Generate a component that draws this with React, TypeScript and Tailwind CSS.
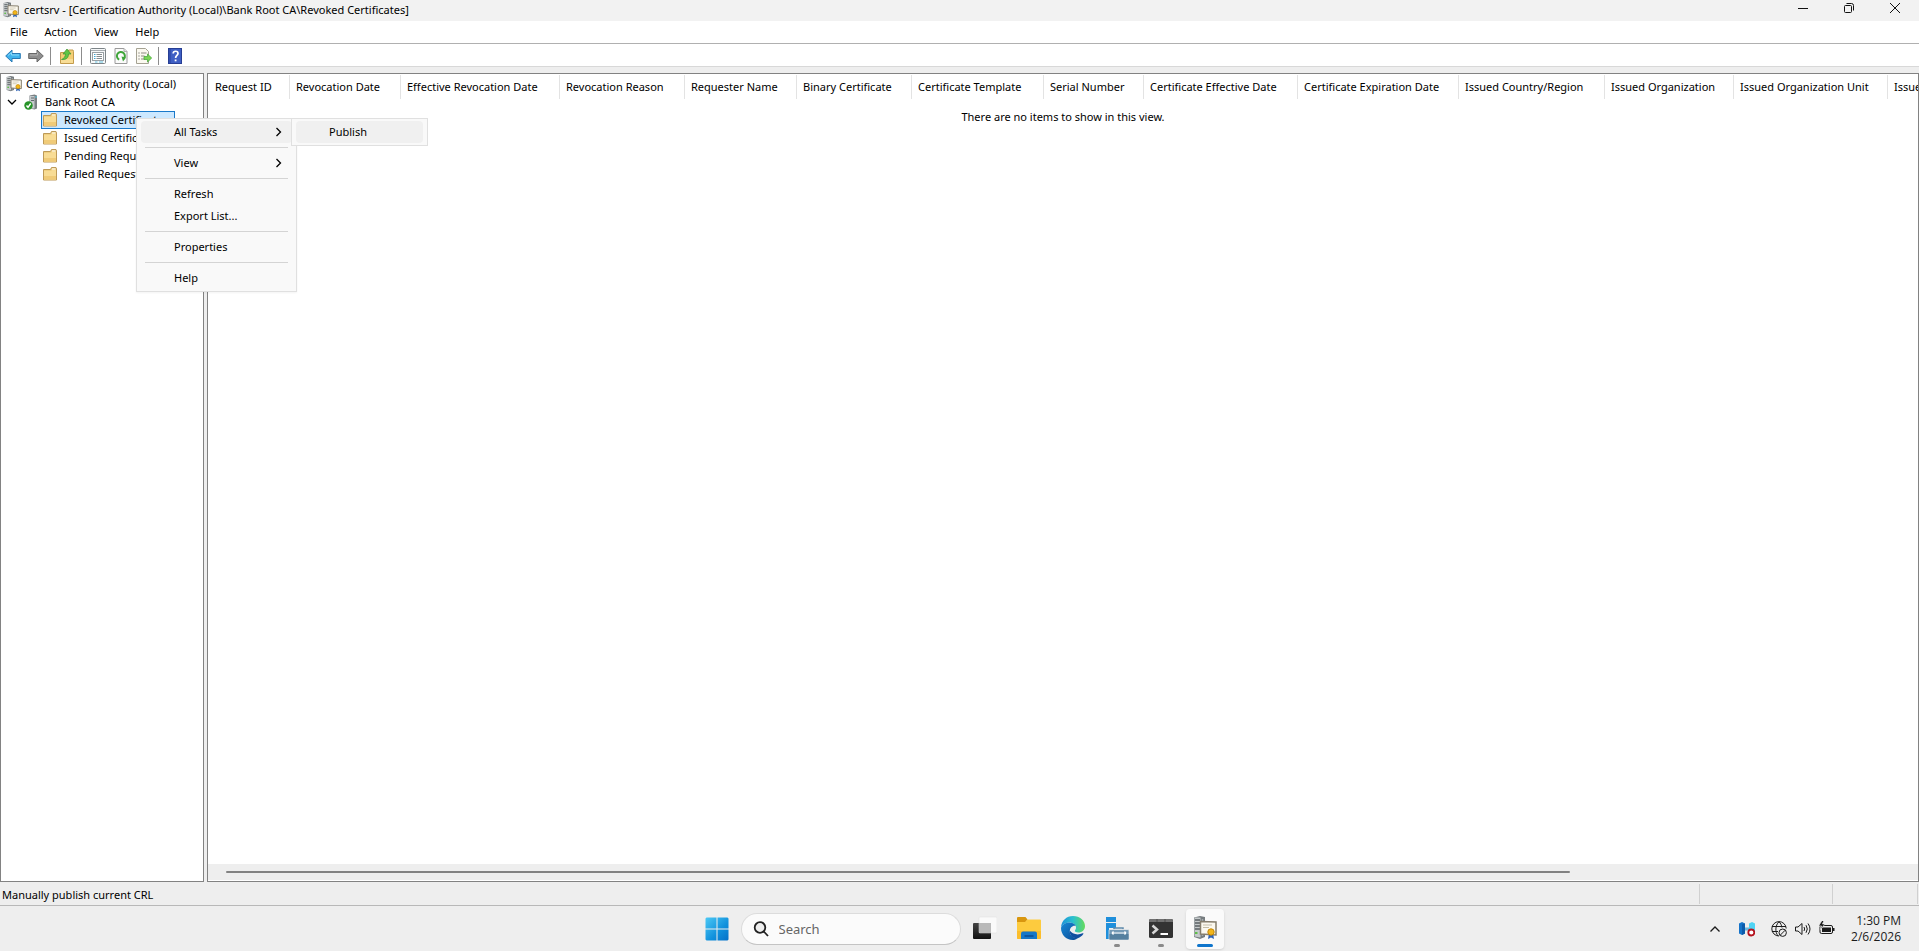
import { useState } from "react";

const columns = [
  { label: "Request ID", width: "w-[81px]" },
  { label: "Revocation Date", width: "w-[111px]" },
  { label: "Effective Revocation Date", width: "w-[159px]" },
  { label: "Revocation Reason", width: "w-[125px]" },
  { label: "Requester Name", width: "w-[112px]" },
  { label: "Binary Certificate", width: "w-[115px]" },
  { label: "Certificate Template", width: "w-[132px]" },
  { label: "Serial Number", width: "w-[100px]" },
  { label: "Certificate Effective Date", width: "w-[154px]" },
  { label: "Certificate Expiration Date", width: "w-[161px]" },
  { label: "Issued Country/Region", width: "w-[146px]" },
  { label: "Issued Organization", width: "w-[129px]" },
  { label: "Issued Organization Unit", width: "w-[154px]" },
  { label: "Issued Common Name", width: "w-[150px]" },
];

const folders = ["Revoked Certificates", "Issued Certificates", "Pending Requests", "Failed Requests"];

function CertIcon({ className }: { className: string }) {
  return (
    <svg viewBox="0 0 24 24" className={className} aria-hidden="true">
      <path d="M1 1.500 7 0l5 1v20l-5 2-6-2z" fill="#777d80" />
      <path d="M1.500 1.500H7.500v20l-6-1z" fill="#c4c9ca" />
      <path d="M2 4h5M2 7h5M2 10h5M2 13h5" stroke="#596064" strokeWidth="1.4" />
      <path d="M9.500 3v17" stroke="#a4abad" strokeWidth="1.500" />
      <rect x="2" y="16" width="2.5" height="2" fill="#5fbf4a" />
      <path d="M7.500 5.500 23 6v13l-15.500-1z" fill="#fbf8ee" stroke="#857d6c" strokeWidth="1.500" />
      <path d="M10 9h9M10 11.500h6" stroke="#c4bda8" strokeWidth="1" />
      <path d="m16 17-1 6 3-1.500 3 1.500-1-6z" fill="#2f63b5" />
      <circle cx="18" cy="16" r="3.200" fill="#f2b619" stroke="#c48608" />
    </svg>
  );
}

function FolderIcon() {
  return (
    <svg viewBox="0 0 16 16" className="size-4 shrink-0" aria-hidden="true">
      <path d="M1.500 3.500h7l1-2h4.500l.5 1.500v11h-13z" fill="#efcf80" stroke="#bd9a58" />
      <path d="M10 2.500h3.500v1H10z" fill="#fff" />
      <path d="M2 5h7l1-1h4v9.500H2z" fill="#f8dc94" />
      <path d="M2 10h12v3.500H2z" fill="#f0cb78" />
    </svg>
  );
}

function ServerIcon() {
  return (
    <svg viewBox="0 0 16 16" className="size-4 shrink-0" aria-hidden="true">
      <path d="m5.500 1.500 5-1 2.500 1v13l-2.500 1-5-1z" fill="#7a8084" />
      <path d="M6 2h4.500v12.500H6z" fill="#c5cacc" />
      <path d="M7 4h3M7 6.500h3" stroke="#62696d" />
      <path d="M11.500 3h1" stroke="#4fc5dd" strokeWidth="2" />
      <circle cx="4.500" cy="11.500" r="4.200" fill="#269328" />
      <path d="m2.500 11.500 1.500 1.800L6.700 9.500" fill="none" stroke="#fff" strokeWidth="1.400" />
    </svg>
  );
}

function BackIcon() {
  return (
    <svg viewBox="0 0 16 16" className="size-4" aria-hidden="true">
      <path d="M.7 8 7 2v3.500h8.300v5H7V14z" fill="#3fb2ec" stroke="#2878b4" />
      <path d="M3 7.500 6.500 4.500V7H14" fill="none" stroke="#8ad8fa" />
    </svg>
  );
}

function ForwardIcon() {
  return (
    <svg viewBox="0 0 16 16" className="size-4" aria-hidden="true">
      <path d="M15.300 8 9 2v3.500H.7v5H9V14z" fill="#8f8f8f" stroke="#686868" />
      <path d="M2 7h7.500V4.500" fill="none" stroke="#b5b5b5" />
    </svg>
  );
}

function UpFolderIcon() {
  return (
    <svg viewBox="0 0 16 16" className="size-4" aria-hidden="true">
      <path d="M1.500 4.500h7l1-2.500h4.500l.5 1.500v12h-13z" fill="#f3ce74" stroke="#c39b4c" />
      <path d="M2 11h12v4H2z" fill="#f8dd96" />
      <path d="M2.500 11.500C5 10.500 6.500 8.500 6.500 6H4l4-5 4 5H9.500c0 4-2.500 6-7 5.500z" fill="#5fc544" stroke="#3b9430" strokeWidth=".7" />
    </svg>
  );
}

function PropertiesIcon() {
  return (
    <svg viewBox="0 0 16 16" className="size-4" aria-hidden="true">
      <rect x=".5" y=".5" width="15" height="15" rx="1" fill="#f6f8f9" stroke="#7d8488" />
      <path d="M1 2.500h14" stroke="#a7adb1" />
      <rect x="2.500" y="4.500" width="11" height="8" fill="#fff" stroke="#9aa1a5" />
      <path d="M4 6.500h1.500M4 8.500h1.500M4 10.500h1.500" stroke="#39a5d2" />
      <path d="M6.500 6.500H12M6.500 8.500H12M6.500 10.500H12" stroke="#858c90" />
      <path d="M5 14h2.500M9 14h4" stroke="#62c1e0" />
    </svg>
  );
}

function RefreshIcon() {
  return (
    <svg viewBox="0 0 16 16" className="size-4" aria-hidden="true">
      <path d="M2 .5h9l3 3v12H2z" fill="#fbfbfb" stroke="#9a9a9a" />
      <path d="M11 .5v3h3" fill="#e4e4e4" stroke="#b0b0b0" />
      <path d="M6.200 11.600A4 4 0 1 1 10.500 11" fill="none" stroke="#3fa53a" strokeWidth="2" />
      <path d="m8.500 8.500 4.500 1-3 4z" fill="#3fa53a" />
    </svg>
  );
}

function ExportIcon() {
  return (
    <svg viewBox="0 0 16 16" className="size-4" aria-hidden="true">
      <path d="M.5.500h9l3 3v12H.500z" fill="#fbf9f0" stroke="#a5a293" />
      <path d="M2.500 5h1M2.500 8h1M2.500 11h1" stroke="#555" />
      <path d="M5 5h5.500M5 8h3.500M5 11h3.500" stroke="#8e8b80" />
      <path d="M8 8.500h3.500V6L15.700 10l-4.200 4v-2.500H8z" fill="#7bd654" stroke="#3fa236" strokeWidth=".7" />
    </svg>
  );
}

function HelpIcon() {
  return (
    <svg viewBox="0 0 16 16" className="size-4" aria-hidden="true">
      <rect x="1.500" y=".5" width="13" height="15" fill="#3f5fc4" stroke="#273e94" />
      <path d="M3 1v14" stroke="#26409c" />
      <path d="M6.200 5.500C6.200 2.500 11 2.500 11 5.500c0 2-2.400 2-2.400 4.500" fill="none" stroke="#fff" strokeWidth="1.700" />
      <path d="M7.700 11.500h1.800v1.800H7.700z" fill="#fff" />
    </svg>
  );
}

function StartIcon() {
  return (
    <svg viewBox="0 0 24 24" className="size-6" aria-hidden="true">
      <defs>
        <linearGradient id="start" x1="0" y1="0" x2="1" y2="1">
          <stop offset="0" stopColor="#4cc9f5" />
          <stop offset=".6" stopColor="#1090dc" />
          <stop offset="1" stopColor="#0570c8" />
        </linearGradient>
      </defs>
      <path d="M1.500.500H11.500v11H.500v-10zM12.500.500h10l1 1v10h-11zM.500 12.500h11v11h-10l-1-1zM12.500 12.500h11v10l-1 1h-10z" fill="url(#start)" />
    </svg>
  );
}

function TaskViewIcon() {
  return (
    <svg viewBox="0 0 24 24" className="size-6" aria-hidden="true">
      <defs>
        <linearGradient id="tvBack" x1="0" y1="0" x2="0" y2="1">
          <stop offset="0" stopColor="#444" />
          <stop offset="1" stopColor="#111" />
        </linearGradient>
      </defs>
      <rect x="0" y="7" width="18" height="16" rx="1" fill="url(#tvBack)" />
      <rect x="6" y="1" width="18" height="16" rx="1" fill="#fafafa" stroke="#dedede" strokeWidth=".5" />
      <path d="M6 7h12v10H7l-1-1z" fill="#b9b9b9" />
    </svg>
  );
}

function ExplorerIcon() {
  return (
    <svg viewBox="0 0 24 24" className="size-6" aria-hidden="true">
      <path d="M0 2q0-1 1-1h7.500l2 2.500L8 7H0z" fill="#d8960f" />
      <path d="M0 6h8l2.500-2.500H23q1 0 1 1V22q0 1-1 1H1q-1 0-1-1z" fill="#fdcb3e" />
      <path d="M0 15h24v7q0 1-1 1H1q-1 0-1-1z" fill="#fbbd2c" />
      <path d="M4 23v-5.500Q4 15.500 6 15.500h12q2 0 2 2V23z" fill="#1577c8" />
      <path d="M7.500 19h9v2h-9z" fill="#0e559e" />
    </svg>
  );
}

function EdgeIcon() {
  return (
    <svg viewBox="0 0 24 24" className="size-6" aria-hidden="true">
      <defs>
        <linearGradient id="edgeTop" x1="0" y1=".4" x2="1" y2=".4">
          <stop offset="0" stopColor="#1c91d8" />
          <stop offset=".5" stopColor="#2bc0cf" />
          <stop offset="1" stopColor="#64db5c" />
        </linearGradient>
        <linearGradient id="edgeLow" x1="0" y1="0" x2="1" y2="1">
          <stop offset="0" stopColor="#1689d6" />
          <stop offset="1" stopColor="#0c4a95" />
        </linearGradient>
      </defs>
      <path d="M0 11.500C.5 4.500 5.500 0 12 0c7 0 12 4.800 12 10 0 4-3 6.500-6.500 6.500-3 0-4-1.200-3.600-2 .5-.8 1.100-1.600 1.100-3 0-2.800-3-5-6.500-5C4.500 6.500 1 9 0 11.500z" fill="url(#edgeTop)" />
      <path d="M0 12C.5 9 4 6.500 8.500 6.500c3 0 5.500 1.500 6.300 3.500-3-.8-6 1.500-6 5.500 0 4 4 7 8 6.700-1.400 1.200-3.300 1.800-5 1.800C5 24 0 18.500 0 12z" fill="url(#edgeLow)" />
      <path d="M8.800 14.500c-.6 4.500 3.200 8.400 8 7.700 2.200-.6 4.200-2.200 5.500-4.200.4-.7-.2-1-.7-.7-5 2.300-10.800.7-12.800-2.800z" fill="#114f9f" />
    </svg>
  );
}

function ServerManagerIcon() {
  return (
    <svg viewBox="0 0 24 24" className="size-6" aria-hidden="true">
      <path d="M1 1h10v22H1z" fill="#1f8fdb" />
      <path d="M1 6.500h10" stroke="#eee" />
      <path d="M4 12h8v3H4z" fill="#efefef" />
      <path d="M9 13.500V12h9v1.500" fill="none" stroke="#5f8bac" strokeWidth="1.500" />
      <rect x="4" y="13.500" width="20" height="10.500" rx="1" fill="#7399b5" stroke="#eeeeee" strokeWidth=".7" />
      <path d="M4.500 18H23.500v5q0 .500-1 .500H5.500q-1 0-1-.500z" fill="#55809f" />
      <path d="M7 17h14M7 17l1.500-1.500M7 17l1.500 1.500M21 17l-1.500-1.500M21 17l-1.500 1.500" stroke="#fff" strokeWidth="1.200" />
    </svg>
  );
}

function TerminalIcon() {
  return (
    <svg viewBox="0 0 24 24" className="size-6" aria-hidden="true">
      <rect x="0" y="3" width="24" height="19" rx="1.500" fill="#333" />
      <path d="M0 6V4.500Q0 3 1.500 3h21Q24 3 24 4.500V6z" fill="#707070" />
      <path d="M8 3v3M16 3v3" stroke="#4a4a4a" />
      <path d="m3.500 9.500 4.500 4-4.500 4" fill="none" stroke="#d6d6d6" strokeWidth="2.500" />
      <path d="M11.500 18H19" stroke="#fff" strokeWidth="2" />
    </svg>
  );
}

function Chevron({ className, d }: { className: string; d: string }) {
  return (
    <svg viewBox="0 0 12 12" className={className} fill="none" stroke="currentColor" strokeWidth="1.300" aria-hidden="true">
      <path d={d} />
    </svg>
  );
}

function ToolButton({ label, children }: { label: string; children: React.ReactNode }) {
  return (
    <button type="button" aria-label={label} className="flex h-full w-[23px] items-center justify-center">
      {children}
    </button>
  );
}

function ToolSeparator() {
  return <span className="mr-1 ml-[3px] h-[18px] w-px bg-[#8c8c8c]" />;
}

function MenuItem({ label, active, submenu }: { label: string; active?: boolean; submenu?: boolean }) {
  return (
    <button
      type="button"
      role="menuitem"
      className={`flex h-[22px] w-full items-center justify-between rounded-sm pr-2 pl-[33px] ${active ? "bg-[#f0f0f0]" : ""}`}
    >
      {label}
      {submenu && <Chevron className="size-3" d="M4.500 2l4 4-4 4" />}
    </button>
  );
}

function MenuSeparator() {
  return (
    <div role="separator" className="flex h-[9px] items-center px-1">
      <span className="h-px w-full bg-[#d4d4d4]" />
    </div>
  );
}

function TaskButton({ label, open, active, children }: { label: string; open?: boolean; active?: boolean; children: React.ReactNode }) {
  return (
    <button type="button" aria-label={label} className="flex h-10 w-11 justify-center">
      <span className={`flex w-[38px] flex-col items-center rounded-sm ${active ? "bg-[#fafafa] shadow-sm" : ""}`}>
        <span className="flex h-[35px] items-end pb-1">{children}</span>
        {open && !active && <span className="h-[3px] w-1.5 rounded-full bg-[#8a8a8a]" />}
        {active && <span className="h-[3px] w-4 rounded-full bg-[#0f75cc]" />}
      </span>
    </button>
  );
}

export default function App() {
  const [query, setQuery] = useState("");
  const [selected, setSelected] = useState("Revoked Certificates");

  return (
    <div className="flex h-screen flex-col overflow-hidden bg-[#eeeeee] font-['Noto_Sans','Open_Sans',sans-serif] text-[11px] leading-4 text-black">
      <header className="flex h-[21px] shrink-0 items-start justify-between bg-[#f2f2f2]">
        <div className="flex items-center gap-[5px] pt-0.5 pl-[3px]">
          <CertIcon className="size-4" />
          <h1 className="whitespace-nowrap">certsrv - [Certification Authority (Local)\Bank Root CA\Revoked Certificates]</h1>
        </div>
        <div className="flex h-4 pr-px">
          <button type="button" aria-label="Minimize" className="flex w-[46px] items-center justify-center">
            <svg viewBox="0 0 10 10" className="size-2.5" stroke="#111"><path d="M0 5.500h10" /></svg>
          </button>
          <button type="button" aria-label="Restore" className="flex w-[46px] items-center justify-center">
            <svg viewBox="0 0 10 10" className="size-2.5" fill="none" stroke="#111">
              <rect x=".5" y="2.500" width="7" height="7" rx="1" />
              <path d="M2.500.500h5q2 0 2 2v5" />
            </svg>
          </button>
          <button type="button" aria-label="Close" className="flex w-[46px] items-center justify-center">
            <svg viewBox="0 0 10 10" className="size-2.5" stroke="#111"><path d="m0 0 10 10M10 0 0 10" /></svg>
          </button>
        </div>
      </header>

      <nav className="flex h-[23px] shrink-0 items-center gap-px border-b border-[#b0b0b0] bg-white pl-0.5">
        <button type="button" className="px-2">File</button>
        <button type="button" className="px-2">Action</button>
        <button type="button" className="px-2">View</button>
        <button type="button" className="px-2">Help</button>
      </nav>

      <div role="toolbar" className="flex h-[23px] shrink-0 items-center border-b border-[#d8d8d8] bg-white pt-0.5 pl-px">
        <ToolButton label="Back"><BackIcon /></ToolButton>
        <ToolButton label="Forward"><ForwardIcon /></ToolButton>
        <ToolSeparator />
        <ToolButton label="Up one level"><UpFolderIcon /></ToolButton>
        <ToolSeparator />
        <ToolButton label="Properties"><PropertiesIcon /></ToolButton>
        <ToolButton label="Refresh"><RefreshIcon /></ToolButton>
        <ToolButton label="Export list"><ExportIcon /></ToolButton>
        <ToolSeparator />
        <ToolButton label="Help"><HelpIcon /></ToolButton>
      </div>

      <main className="flex min-h-0 flex-1 gap-[3px] pt-1.5">
        <aside className="relative w-[204px] shrink-0 border border-[#828282] bg-white pt-px">
          <div className="flex h-[18px] items-center gap-1 pl-[5px]">
            <CertIcon className="size-4" />
            <span className="whitespace-nowrap">Certification Authority (Local)</span>
          </div>
          <div className="flex h-[18px] items-center pl-[5px]">
            <Chevron className="mr-1.5 size-3" d="M2 4l4 4 4-4" />
            <ServerIcon />
            <span className="pl-[5px]">Bank Root CA</span>
          </div>
          <ul className="pl-10">
            {folders.map((name) => (
              <li key={name}>
                <button
                  type="button"
                  onClick={() => setSelected(name)}
                  className={`flex h-[18px] w-[134px] items-center gap-1.5 border whitespace-nowrap ${
                    selected === name ? "border-[#1979ca] bg-[#cce8ff]" : "border-transparent"
                  }`}
                >
                  <FolderIcon />
                  {name}
                </button>
              </li>
            ))}
          </ul>

          <div className="absolute top-[44px] left-[135px] z-10 flex items-start">
            <div role="menu" aria-label="Actions" className="w-[161px] border border-[#e0e0e0] bg-[#f9f9f9] px-1 py-0.5 shadow-xs">
              <MenuItem label="All Tasks" active submenu />
              <MenuSeparator />
              <MenuItem label="View" submenu />
              <MenuSeparator />
              <MenuItem label="Refresh" />
              <MenuItem label="Export List..." />
              <MenuSeparator />
              <MenuItem label="Properties" />
              <MenuSeparator />
              <MenuItem label="Help" />
            </div>
            <div role="menu" aria-label="All Tasks" className="-ml-[6px] w-[137px] border border-[#e0e0e0] bg-[#f9f9f9] px-1 py-0.5">
              <MenuItem label="Publish" active />
            </div>
          </div>
        </aside>

        <section className="flex min-w-0 flex-1 flex-col overflow-hidden border border-[#828282] bg-white">
          <div className="min-h-0 flex-1 overflow-hidden pt-px">
            <table className="ml-px w-[1829px] table-fixed border-separate border-spacing-0">
              <thead>
                <tr>
                  {columns.map((col) => (
                    <th key={col.label} scope="col" className={`h-6 border-r border-[#e3e3e3] p-0 pl-1.5 text-left font-normal whitespace-nowrap ${col.width}`}>
                      {col.label}
                    </th>
                  ))}
                </tr>
              </thead>
            </table>
            <p className="pt-2.5 text-center">There are no items to show in this view.</p>
          </div>
          <div className="mb-px flex h-4 shrink-0 items-center bg-[#eeeeee] pr-[348px] pl-[18px]">
            <div className="h-0.5 w-full rounded-full bg-[#828282]" />
          </div>
        </section>
      </main>

      <div className="flex h-6 shrink-0 items-center border-b border-[#b8b8b8]">
        <p role="status" className="flex-1 pt-0.5 pl-0.5">Manually publish current CRL</p>
        <span className="h-5 w-[133px] border-l border-[#d0d0d0]" />
        <span className="mr-px h-5 w-[86px] border-x border-[#d0d0d0]" />
      </div>

      <footer className="flex h-[45px] shrink-0 items-center pl-0.5">
        <div className="flex-1" />
        <div className="flex items-center gap-0.5">
          <button type="button" aria-label="Start" className="flex h-10 w-11 items-center justify-center"><StartIcon /></button>
          <label className="flex h-8 w-[220px] items-center gap-2.5 rounded-full border border-[#dcdcdc] border-b-[#c4c4c4] bg-[#fbfbfb] pl-[11px]">
            <svg viewBox="0 0 16 16" className="size-4 shrink-0" fill="none" stroke="#222" strokeWidth="1.800" aria-hidden="true">
              <circle cx="7" cy="6.500" r="5.300" fill="#eee" />
              <path d="m10.800 10.500 4.200 4.500" />
            </svg>
            <input
              type="text"
              aria-label="Search"
              placeholder="Search"
              value={query}
              onChange={(e) => setQuery(e.target.value)}
              className="w-[150px] bg-transparent text-[13px] leading-5 outline-none placeholder:text-[#666666]"
            />
          </label>
          <div className="flex">
            <TaskButton label="Task view"><TaskViewIcon /></TaskButton>
            <TaskButton label="File Explorer"><ExplorerIcon /></TaskButton>
            <TaskButton label="Microsoft Edge"><EdgeIcon /></TaskButton>
            <TaskButton label="Server Manager" open><ServerManagerIcon /></TaskButton>
            <TaskButton label="Terminal" open><TerminalIcon /></TaskButton>
            <TaskButton label="Certification Authority" open active><CertIcon className="size-6" /></TaskButton>
          </div>
        </div>
        <div className="flex flex-1 items-center justify-end text-[#1b1b1b]">
          <button type="button" aria-label="Show hidden icons" className="mr-[18px]">
            <Chevron className="size-3" d="M1.500 8.500 6 4l4.500 4.500" />
          </button>
          <svg viewBox="0 0 16 16" className="mr-4 size-4" aria-hidden="true">
            <path d="M0 2.500 3 1l3 1.500v10L3 14l-3-1.500z" fill="#1473c9" />
            <path d="M3 3.500 6 2.500v10L3 14z" fill="#0d5aa9" />
            <path d="M10 2.500 13 1l3 1.500v9H10z" fill="#4fd3f3" />
            <path d="M6 6.500h4v3H6z" fill="#69b9df" />
            <circle cx="12.300" cy="11.500" r="3" fill="#fff" stroke="#b5121d" strokeWidth="1.800" />
          </svg>
          <svg viewBox="0 0 16 16" className="mr-2 size-4" fill="none" stroke="currentColor" aria-hidden="true">
            <path d="M8 15A7.200 7.200 0 1 1 15.200 7.500M1 5.500h14M1 10.500h6M8 .8C4 4.500 4 11 7 15M8 .8c1.700 1.500 2.600 3.500 2.900 5.700" />
            <circle cx="11.700" cy="11.700" r="3.700" />
            <path d="m9.200 14.200 5-5" />
          </svg>
          <svg viewBox="0 0 16 16" className="mr-2 size-4" fill="none" stroke="currentColor" aria-hidden="true">
            <path d="M.500 6v4h2.500L7 13.500v-11L3 6zM9 6q1.300 2 0 4M11 4.200q2.600 3.800 0 7.600M13 2.500q4 5.500 0 11" />
          </svg>
          <svg viewBox="0 0 16 16" className="mr-4 size-4" aria-hidden="true">
            <rect x="1" y="4.500" width="12.500" height="8" rx="1.500" fill="none" stroke="currentColor" />
            <path d="M3 6.500h9v4.500H3zM14 7h1.500v3H14z" fill="currentColor" />
            <path d="M3-.5-.5 5h3L1.500 8.500 6 3H3.500L5-.5z" fill="currentColor" stroke="#eee" strokeWidth=".7" />
          </svg>
          <div className="mr-[18px] text-right font-['Open_Sans',sans-serif] text-[12px]">
            <p>1:30 PM</p>
            <p>2/6/2026</p>
          </div>
        </div>
      </footer>
    </div>
  );
}
